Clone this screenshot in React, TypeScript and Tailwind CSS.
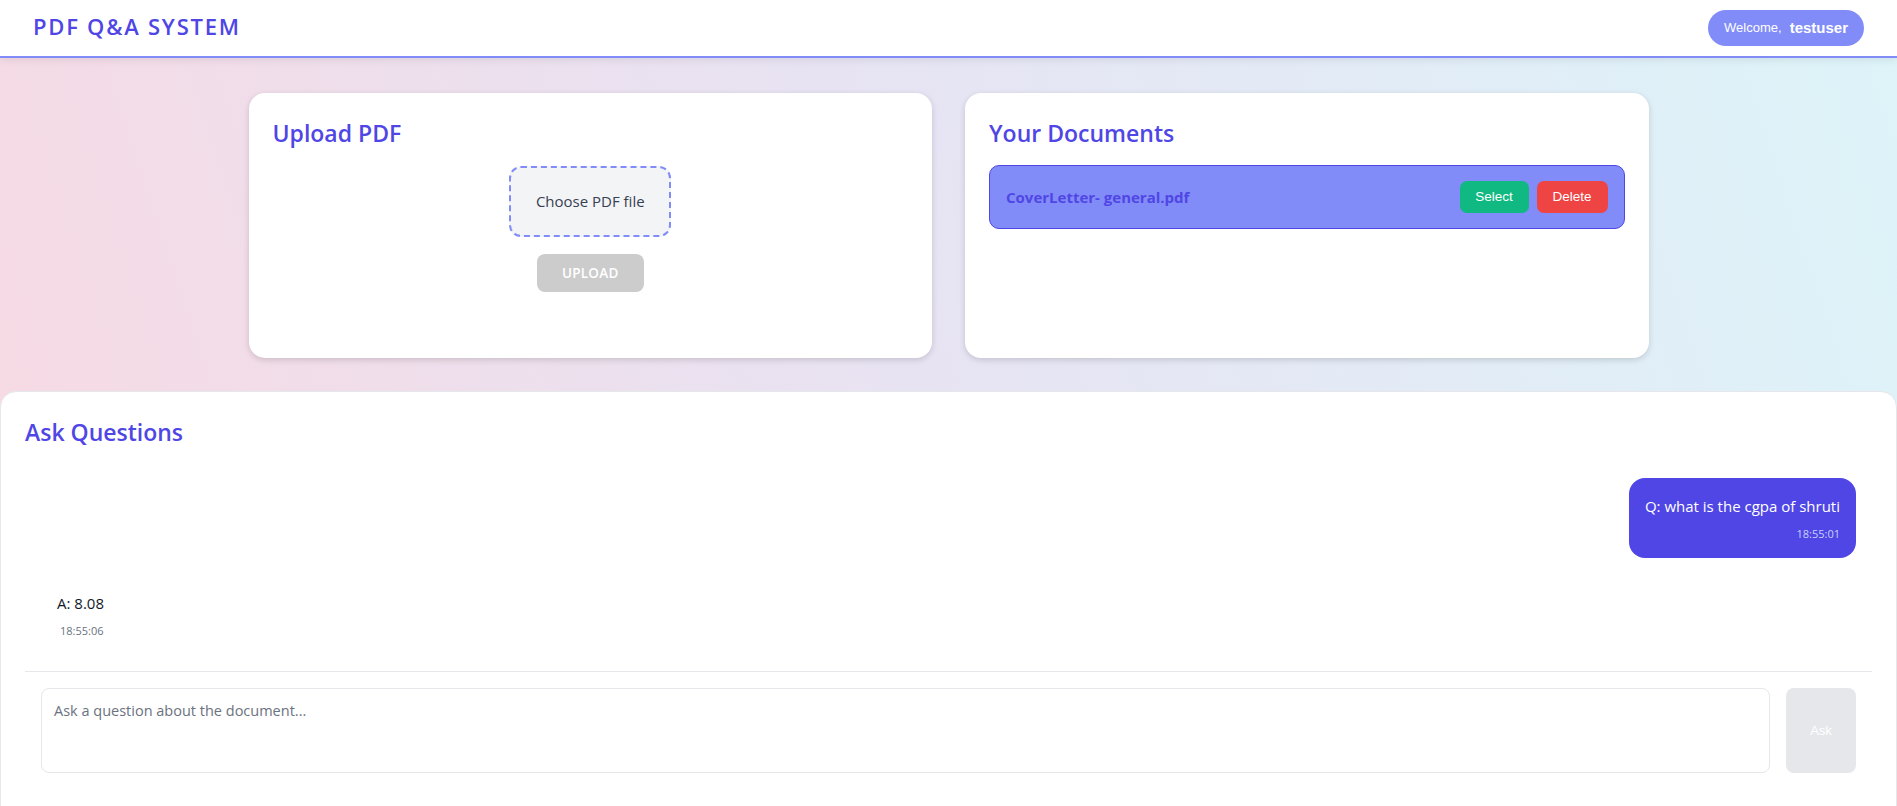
import { useState } from "react";

type Msg = { role: "q" | "a"; text: string; time: string };

const mensajes: Msg[] = [
  { role: "q", text: "Q: what is the cgpa of shruti", time: "18:55:01" },
  { role: "a", text: "A: 8.08", time: "18:55:06" },
];

function Header() {
  return (
    <header className="bg-white border-b-2 border-[#818cf8] shadow-[0_2px_8px_rgba(0,0,0,0.08)] h-[58px] px-[33px] flex items-center justify-between">
      <h1 className="text-[22px] font-semibold tracking-[0.08em] text-[#4f46e5] -mt-[3px]">PDF Q&amp;A SYSTEM</h1>
      <div className="h-[36px] px-[16px] rounded-full bg-[#818cf8] text-white flex items-center gap-[8px] font-['Liberation_Sans',Arial,sans-serif]">
        <span className="text-[13px]">Welcome,</span>
        <span className="text-[15px] font-bold">testuser</span>
      </div>
    </header>
  );
}

function UploadCard() {
  return (
    <div className="bg-white rounded-[16px] shadow-[0_2px_6px_rgba(0,0,0,0.15)] p-6 h-[265px]">
      <h2 className="text-[23px] font-semibold text-[#4f46e5] leading-[32px]">Upload PDF</h2>
      <div className="flex flex-col items-center mt-[17px]">
        <label className="w-[162px] h-[71px] rounded-[12px] border-2 border-dashed border-[#818cf8] bg-[#f3f4f6] flex items-center justify-center text-[15px] text-[#374151] cursor-pointer">
          Choose PDF file
        </label>
        <button className="mt-[17px] w-[107px] h-[38px] rounded-[8px] bg-[#cccccc] text-white text-[13.5px] font-semibold tracking-[0.02em]">
          UPLOAD
        </button>
      </div>
    </div>
  );
}

function DocsCard() {
  return (
    <div className="bg-white rounded-[16px] shadow-[0_2px_6px_rgba(0,0,0,0.15)] p-6 h-[265px]">
      <h2 className="text-[23px] font-semibold text-[#4f46e5] leading-[32px]">Your Documents</h2>
      <div className="mt-[16px] h-[64px] rounded-[10px] border border-[#4f46e5] bg-[#818cf8] flex items-center justify-between pl-[16px] pr-[16px]">
        <span className="text-[15px] font-bold text-[#4f46e5]">CoverLetter- general.pdf</span>
        <div className="flex gap-[8px] font-['Liberation_Sans',Arial,sans-serif]">
          <button className="w-[69px] h-[32px] rounded-[7px] bg-[#10b981] text-white text-[13.5px]">Select</button>
          <button className="w-[71px] h-[32px] rounded-[7px] bg-[#ef4444] text-white text-[13.5px]">Delete</button>
        </div>
      </div>
    </div>
  );
}

function AskPanel() {
  const [pregunta, setPregunta] = useState("");
  return (
    <section className="bg-white rounded-t-[16px] border border-[#e5e7eb] px-6 pt-6 pb-10">
      <h2 className="text-[23px] font-semibold text-[#4f46e5] leading-[32px]">Ask Questions</h2>
      <div className="mt-[14px] p-4 flex flex-col gap-[17px]">
        {mensajes.map((m, i) =>
          m.role === "q" ? (
            <div key={i} className="self-end bg-[#4f46e5] text-white rounded-[16px] px-4 pt-[16px] pb-[16px] text-right">
              <p className="text-[15px] leading-6">{m.text}</p>
              <p className="mt-2 text-[11px] leading-4 text-[#c7d2fe]">{m.time}</p>
            </div>
          ) : (
            <div key={i} className="self-start rounded-[16px] px-4 py-4">
              <p className="text-[15px] leading-6 text-[#111827]">{m.text}</p>
              <p className="mt-2 text-[11px] leading-4 text-[#6b7280] pl-[3px]">{m.time}</p>
            </div>
          )
        )}
      </div>
      <div className="border-t border-[#e5e7eb] px-4 pt-4 flex gap-4">
        <textarea
          value={pregunta}
          onChange={(e) => setPregunta(e.target.value)}
          placeholder="Ask a question about the document..."
          className="flex-1 h-[85px] resize-none rounded-[8px] border border-[#e5e7eb] px-[12px] py-[11px] text-[14.5px] text-[#374151] placeholder:text-[#6b7280] outline-none"
        />
        <button className="w-[70px] h-[85px] rounded-[8px] bg-[#e5e7eb] text-white text-[13px] font-['Liberation_Sans',Arial,sans-serif]">
          Ask
        </button>
      </div>
    </section>
  );
}

export default function App() {
  return (
    <div className="min-h-screen font-['Open_Sans','Noto_Sans',sans-serif] bg-[linear-gradient(72deg,#f8d9e2_0%,#e7e3f3_50%,#ddf4f9_100%)]">
      <Header />
      <main className="pt-[35px]">
        <div className="max-w-[1400px] mx-auto grid grid-cols-2 gap-[33px]">
          <UploadCard />
          <DocsCard />
        </div>
        <div className="mt-[33px]">
          <AskPanel />
        </div>
      </main>
    </div>
  );
}
